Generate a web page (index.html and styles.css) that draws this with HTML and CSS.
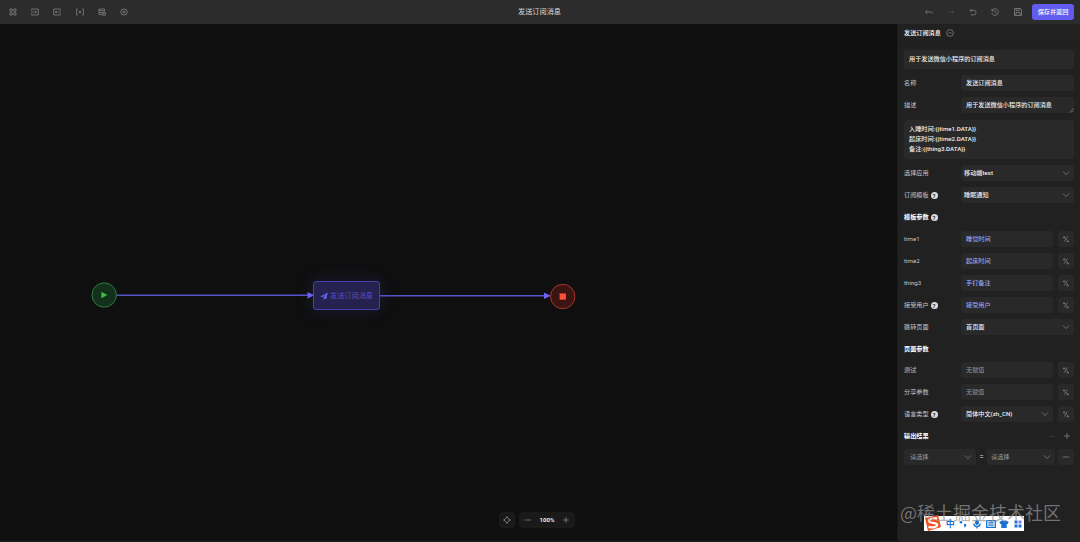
FILE: index.html
```html
<!DOCTYPE html>
<html lang="zh-CN">
<head>
    <meta charset="UTF-8">
    <meta name="viewport" content="width=device-width, initial-scale=1.0">
    <title>发送订阅消息</title>
    <link rel="stylesheet" href="styles.css">
</head>
<body>
    <!-- shared icons -->
    <svg class="defs" width="0" height="0">
        <symbol id="down" viewBox="0 0 8 8"><path d="M1 2.5 4 5.5 7 2.5"/></symbol>
        <symbol id="formula" viewBox="0 0 8 8"><path d="M1 2.4h2.200M2.100 1.300v2.200M5.300 1.500 2.300 6.500M4.500 4.200l2.200 2.500H4.200"/></symbol>
        <symbol id="plus" viewBox="0 0 8 8"><path d="M4 1v6M1 4h6"/></symbol>
        <symbol id="minus" viewBox="0 0 8 8"><path d="M.8 4h6.4"/></symbol>
    </svg>

    <header class="topbar">
        <div class="tools">
            <svg viewBox="0 0 8 8"><path d="M1 1h2.2v2.2H1zM4.8 1H7v2.2H4.8zM1 4.8h2.2V7H1zM4.8 4.8H7V7H4.8z"/></svg>
            <svg viewBox="0 0 8 8"><path d="M.7 2.5V1h6.6v6H.7V5.5M0 4h2.5M3.5 2.8l2 2.4M5.5 2.8l-2 2.4"/></svg>
            <svg viewBox="0 0 8 8"><path d="M7.3 2.5V1H.7v6h6.6V5.5M5.2 4H8M2.2 2.8l2 2.4M4.2 2.8l-2 2.4"/></svg>
            <svg viewBox="0 0 8 8"><path d="M1.7.9H.6v6.2h1.1M6.3.9h1.1v6.2H6.3M2.8 2.7l2.4 2.6M5.2 2.7 2.8 5.3"/></svg>
            <svg viewBox="0 0 8 8"><path d="M3.6 6.5H1V1h5.5v2.3M1 2.7h5.5M1 4.6h3M4.4 4.4h2.9v2.9H4.4zM5 5.8h1.6"/></svg>
            <svg viewBox="0 0 8 8"><path d="M4 .7 5 1.5l1.3-.2.3 1.3.9 1.4-.9 1.4-.3 1.3L5 6.500l-1 .8-1-.8-1.300.2-.3-1.300L.5 4l.9-1.400.3-1.300 1.300.2z"/><circle cx="4" cy="4" r="1.1"/></svg>
        </div>
        <h1 class="title">发送订阅消息</h1>
        <div class="actions">
            <svg viewBox="0 0 8 8"><path d="M2.300 2.200.5 4l1.800 1.600M.5 4h5.800q1.200 0 1.200 1.400"/></svg>
            <svg class="dim" viewBox="0 0 8 8"><path d="M1.800 4h5M5 2.500 6.800 4 5 5.500"/></svg>
            <svg viewBox="0 0 8 8"><path d="M2.5.8 1 2.300l1.500 1.500M1 2.300h3.800a2.300 2.300 0 0 1 0 4.600H1.500"/></svg>
            <svg viewBox="0 0 8 8"><path d="M.9 1v1.800h1.800M1 2.700A3.300 3.300 0 1 1 .8 4.800M4 2.200v2l1.500 1"/></svg>
            <svg viewBox="0 0 8 8"><path d="M.5.5h6l1 1v6h-7zM2.200.5v2h3v-2M2 7.500v-3h4v3"/></svg>
            <button class="save">保存并返回</button>
        </div>
    </header>

    <main class="workspace">
        <section class="canvas">
            <svg class="flow" viewBox="0 0 897 518">
                <path class="edge" d="M117 271.3h192M379 271.8h167"/>
                <path class="arrow" d="M307.5 268l7 3.3-7 3.3zM544 268.5l7 3.3-7 3.3z"/>
                <circle class="start" cx="104.2" cy="271" r="12.2"/>
                <path class="play" d="M101.3 267.8v6.4l6.2-3.2z"/>
                <circle class="end" cx="562.7" cy="272.5" r="12.2"/>
                <path class="stop" d="M559.6 269.4h6.3v6.3h-6.3z"/>
            </svg>
            <div class="node">
                <svg viewBox="0 0 8 8"><path d="M7.8.5.3 4.4l2 .8 4-3.3-3 3.8v2l1.2-1.3 1.7.8z"/></svg>
                发送订阅消息
            </div>
            <div class="zoombar">
                <button class="zoom-box fit"><svg viewBox="0 0 8 8"><path d="M4 1 7 4 4 7 1 4zM4 0v2.4M4 5.6V8M0 4h2.4M5.6 4H8"/></svg></button>
                <div class="zoom-box">
                    <svg><use href="#minus"/></svg>
                    <b>100%</b>
                    <svg><use href="#plus"/></svg>
                </div>
            </div>
        </section>

        <aside class="panel">
            <div class="panel-title">发送订阅消息 <svg viewBox="0 0 8 8"><circle cx="4" cy="4" r="3.4"/><path d="M2.4 4.6 4 3.3l1.6 1.3"/></svg></div>
            <div class="field intro">用于发送微信小程序的订阅消息</div>
            <div class="row"><label>名称</label><div class="field">发送订阅消息</div></div>
            <div class="row"><label>描述</label><div class="field area">用于发送微信小程序的订阅消息<svg class="grip" viewBox="0 0 5 5"><path d="M.5 4.5l4-4M2.8 4.5l1.7-1.7"/></svg></div></div>
            <div class="field template">入睡时间:{{time1.DATA}}<br>起床时间:{{time2.DATA}}<br>备注:{{thing3.DATA}}</div>
            <div class="row"><label>选择应用</label><div class="field select">移动端test<svg><use href="#down"/></svg></div></div>
            <div class="row"><label>订阅模板<i class="help">?</i></label><div class="field select">睡眠通知<svg><use href="#down"/></svg></div></div>
            <div class="row"><h2>模板参数<i class="help">?</i></h2></div>
            <div class="row"><label>time1</label><div class="field var">睡觉时间</div><button class="fx"><svg><use href="#formula"/></svg></button></div>
            <div class="row"><label>time2</label><div class="field var">起床时间</div><button class="fx"><svg><use href="#formula"/></svg></button></div>
            <div class="row"><label>thing3</label><div class="field var">手打备注</div><button class="fx"><svg><use href="#formula"/></svg></button></div>
            <div class="row"><label>接受用户<i class="help">?</i></label><div class="field var">接受用户</div><button class="fx"><svg><use href="#formula"/></svg></button></div>
            <div class="row"><label>跳转页面</label><div class="field select page">首页面<svg><use href="#down"/></svg></div></div>
            <div class="row group"><h2>页面参数</h2></div>
            <div class="row"><label>测试</label><div class="field empty">无赋值</div><button class="fx"><svg><use href="#formula"/></svg></button></div>
            <div class="row"><label>分享参数</label><div class="field empty">无赋值</div><button class="fx"><svg><use href="#formula"/></svg></button></div>
            <div class="row"><label>语言类型<i class="help">?</i></label><div class="field select page">简体中文(zh_CN)<svg><use href="#down"/></svg></div><button class="fx"><svg><use href="#formula"/></svg></button></div>
            <div class="row"><h2>输出结果</h2><span class="more">···</span><svg class="add"><use href="#plus"/></svg></div>
            <div class="row result">
                <div class="field select empty from">请选择<svg><use href="#down"/></svg></div>
                <span class="eq">=</span>
                <div class="field select empty to">请选择<svg><use href="#down"/></svg></div>
                <button class="fx"><svg><use href="#minus"/></svg></button>
            </div>
        </aside>
    </main>

    <!-- floating input method bar -->
    <div class="ime">
        <svg class="sogou" viewBox="0 0 18 18"><path class="tile" d="M1 4 14 1l3 12-13 4z"/><path class="curve" d="M13.2 4.6C9 3.6 4.5 5 5 7.4c.5 2.2 8 .5 8.2 3.3.2 2.4-4.7 3.3-8.7 2.2"/></svg>
        <span>中</span>
        <svg viewBox="0 0 10 10"><circle cx="3" cy="3.2" r="1.3"/><path d="M6 5h2.2v2L6.7 8.5H6l.7-1.5H6z"/></svg>
        <svg viewBox="0 0 10 10"><rect x="3.2" y=".5" width="3.6" height="5.5" rx="1.8"/><path class="line" d="M1.800 4.500C1.800 8.500 8.200 8.500 8.200 4.500M5 7.500V9.500"/></svg>
        <svg viewBox="0 0 10 10"><path class="line" d="M.7 1.700h8.600v6.600H.7zM2.300 3.900h5.400M2.300 6.200h5.400"/></svg>
        <svg viewBox="0 0 10 10"><path d="M3.300 1.200Q5 2.700 6.700 1.200L9.700 3 8.500 5.200 7.700 4.800V9H2.300V4.800l-.8.4L.3 3z"/></svg>
        <svg viewBox="0 0 10 10"><path d="M1.500 1.500H4.500v3H1.500zM1.500 5.500H4.500v3H1.500zM5.500 5.500H8.500v3H5.500z"/><path class="pale" d="M5.500 1.500H8.500v3H5.500z"/></svg>
    </div>
    <div class="watermark">@稀土掘金技术社区</div>
</body>
</html>
```
FILE: styles.css
```css
* {
    box-sizing: border-box;
}
body {
    margin: 0;
    height: 542px;
    display: flex;
    flex-direction: column;
    overflow: hidden;
    background: #0f0f0f;
    color: #e6e6e6;
    font-family: Roboto, "Noto Sans CJK SC", sans-serif;
    font-size: 6.15px;
    line-height: 10px;
}
svg {
    width: 8px;
    height: 8px;
    flex: none;
    fill: none;
    stroke: #8c8c8c;
    stroke-width: 0.7;
}
button {
    border: 0;
    padding: 0;
    font: inherit;
    display: flex;
    align-items: center;
    justify-content: center;
}
.defs {
    position: absolute;
    width: 0;
    height: 0;
}

/* top bar */
.topbar {
    height: 24px;
    flex: none;
    display: grid;
    grid-template-columns: 1fr auto 1fr;
    align-items: center;
    background: #2c2c2c;
    padding: 0 6px 0 9px;
}
.tools {
    display: flex;
    gap: 14.2px;
}
.title {
    margin: 0 4px 0 0;
    font-size: 7.15px;
    font-weight: 400;
    color: #ddd;
}
.actions {
    display: flex;
    justify-content: flex-end;
    align-items: center;
    gap: 14.3px;
}
.actions .dim {
    opacity: 0.4;
}
.save {
    width: 42px;
    height: 16px;
    margin-left: -4px;
    border-radius: 3px;
    background: #615ced;
    color: #fff;
    font-weight: 500;
}

.workspace {
    flex: 1;
    display: flex;
    min-height: 0;
}

/* flow canvas */
.canvas {
    position: relative;
    width: 897px;
    flex: none;
    border-bottom: 1px solid #14201f;
}
.flow {
    display: block;
    width: 897px;
    height: 518px;
    stroke: none;
}
.edge {
    stroke: #5751cc;
    stroke-width: 1.5;
}
.arrow {
    fill: #6963f0;
}
.start {
    fill: #12301a;
    stroke: #2f7a3c;
    stroke-width: 1;
}
.play {
    fill: #43b64c;
}
.end {
    fill: #3a1512;
    stroke: #a8352c;
    stroke-width: 1;
}
.stop {
    fill: #ff4f35;
}
.node {
    position: absolute;
    left: 313px;
    top: 257px;
    width: 67px;
    height: 29px;
    display: flex;
    align-items: center;
    justify-content: center;
    gap: 2px;
    border: 1px solid #4640a8;
    border-radius: 3px;
    background: #25224f;
    box-shadow: 0 0 18px rgba(88, 80, 220, 0.2);
    color: #564fc8;
    font-size: 7.15px;
}
.node svg {
    fill: #6963f0;
    stroke: none;
}
.zoombar {
    position: absolute;
    left: 499px;
    top: 488px;
    display: flex;
    gap: 4px;
}
.zoom-box {
    width: 56px;
    height: 16px;
    display: flex;
    align-items: center;
    justify-content: space-between;
    padding: 0 5px;
    border-radius: 4px;
    background: #1a1a1a;
}
.zoom-box.fit {
    width: 16px;
    padding: 0;
    justify-content: center;
}
.zoom-box b {
    font-weight: 700;
}

/* settings panel */
.panel {
    width: 183px;
    padding: 0 6px 0 7px;
    background: #212121;
    border-left: 1px solid #191919;
}
.panel-title {
    height: 19.5px;
    margin: 0 -6px 6px -7px;
    padding: 0 6px;
    display: flex;
    align-items: center;
    gap: 5px;
    border-bottom: 1px solid #1d1d1d;
    color: #fff;
    font-weight: 500;
}
.row {
    height: 22.05px;
    display: flex;
    align-items: center;
    margin-left: -1px;
}
.row label {
    width: 57px;
    flex: none;
    color: #c4c4c4;
}
.row h2 {
    margin: 0;
    flex: 1;
    font-size: 6.15px;
    font-weight: 700;
    color: #fff;
}
.row label,
.row h2 {
    display: flex;
    align-items: center;
    gap: 2px;
}
.row.group {
    margin-bottom: -1.3px;
}
.help {
    width: 7px;
    height: 7px;
    border-radius: 50%;
    background: #ddd;
    color: #222;
    font-size: 6px;
    font-style: normal;
    font-weight: 700;
    line-height: 7px;
    text-align: center;
}
.field {
    flex: 1;
    height: 16px;
    display: flex;
    align-items: center;
    padding: 0 5px;
    border-radius: 3px;
    background: #292929;
    color: #eee;
    font-weight: 500;
}
.intro {
    height: 19px;
    margin: 0 0 3.5px -1px;
}
.area {
    position: relative;
}
.grip {
    position: absolute;
    right: 0;
    bottom: 0;
    width: 5px;
    height: 5px;
}
.template {
    display: block;
    height: 39px;
    margin: 3.5px 0 3.5px -1px;
    padding: 4px 5px;
}
.select {
    justify-content: space-between;
    padding: 0 4px 0 3px;
}
.select.page {
    padding: 0 4px 0 5px;
}
.var {
    color: #98a2ea;
}
.empty {
    color: #999;
    font-weight: 400;
}
.fx {
    width: 16px;
    height: 16px;
    margin-left: 5px;
    border-radius: 3px;
    background: #292929;
}
.more {
    margin-right: 9px;
    color: #aaa;
}
.add {
    margin-right: 3px;
}
.row.result {
    margin-top: -1px;
}
.result .from {
    flex: none;
    width: 72px;
    padding-left: 6px;
}
.eq {
    width: 11px;
    text-align: center;
    font-size: 7.5px;
}
.result .to {
    padding-left: 4px;
}
.result .fx {
    margin-left: 3px;
}

/* input method bar */
.ime {
    position: absolute;
    left: 924px;
    top: 516px;
    width: 100px;
    height: 15px;
    display: flex;
    align-items: center;
    gap: 3.7px;
    background: #fff;
    color: #1672d4;
    font-size: 9px;
    font-weight: 700;
}
.ime svg {
    width: 10px;
    height: 10px;
    fill: #1672d4;
    stroke: none;
}
.ime .line {
    fill: none;
    stroke: #1672d4;
    stroke-width: 1.3;
}
.ime .pale {
    fill: #8e7bf0;
}
.ime .sogou {
    width: 18px;
    height: 18px;
    margin-top: -2px;
}
.ime .tile {
    fill: #f0501e;
}
.ime .curve {
    fill: none;
    stroke: #fff;
    stroke-width: 2.2;
}
.watermark {
    position: absolute;
    left: 900px;
    top: 500px;
    color: rgba(150, 150, 150, 0.7);
    font-family: "Noto Sans CJK SC", sans-serif;
    font-size: 18px;
    line-height: 24px;
    white-space: nowrap;
}
```
